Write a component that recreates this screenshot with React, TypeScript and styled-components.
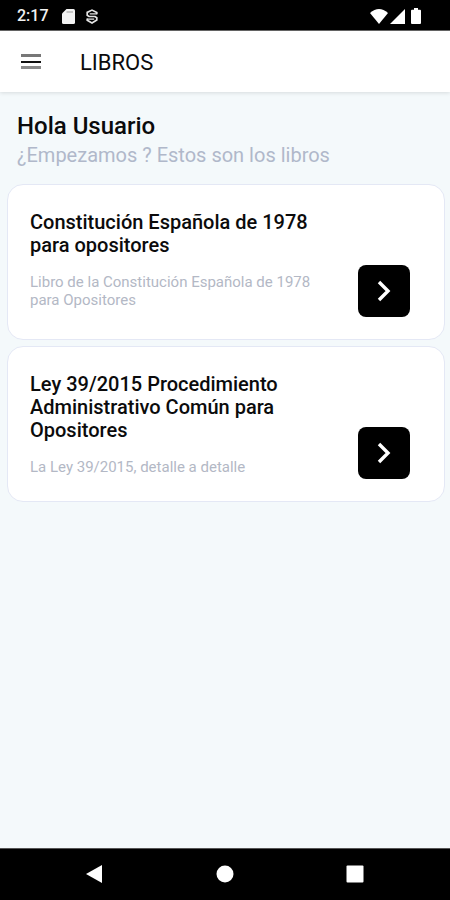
import React from "react";
import styled, { createGlobalStyle } from "styled-components";

const GlobalStyle = createGlobalStyle`
  *, *::before, *::after { box-sizing: border-box; }
  body { margin: 0; background: #f4f9fb; }
  h1, h2, p { margin: 0; }
  button { border: 0; padding: 0; cursor: pointer; font: inherit; }
  svg { display: block; }
`;

const Screen = styled.div`
  min-height: 100vh;
  display: flex;
  flex-direction: column;
  background: #f4f9fb;
  color: #0b0b0c;
  font-family: Roboto, sans-serif;
`;

const StatusBar = styled.div`
  height: 31px;
  padding: 2px 28px 0 17px;
  display: flex;
  align-items: center;
  justify-content: space-between;
  background: #000;
  color: #f2f2f2;
  border-bottom: 1px solid #666;
`;

const StatusGroup = styled.div<{ $gap: number }>`
  display: flex;
  align-items: center;
  gap: ${(p) => p.$gap}px;
`;

const Clock = styled.time`
  font-size: 16px;
  line-height: 20px;
  font-weight: 500;
  margin-right: 2px;
`;

const AppBar = styled.header`
  height: 61px;
  padding: 0 20px;
  display: flex;
  align-items: center;
  gap: 38px;
  background: #fff;
  box-shadow: 0 1px 4px rgba(0, 0, 0, 0.12);
`;

const MenuButton = styled.button`
  background: transparent;
`;

const AppTitle = styled.h1`
  font-size: 22px;
  line-height: 28px;
  font-weight: 400;
  padding-top: 2px;
`;

const Content = styled.main`
  flex: 1;
  padding: 20px 5px 20px 7px;
`;

const Greeting = styled.section`
  padding: 0 10px 15px;
`;

const Hello = styled.h2`
  font-size: 24px;
  line-height: 28px;
  font-weight: 500;
`;

const Lead = styled.p`
  margin-top: 1px;
  font-size: 20px;
  line-height: 28px;
  color: #b0b8ca;
`;

const BookList = styled.div`
  display: flex;
  flex-direction: column;
  gap: 6px;
`;

const BookCard = styled.article`
  min-height: 156px;
  padding: 26px 34px 22px 22px;
  display: flex;
  justify-content: space-between;
  gap: 32px;
  background: #fff;
  border: 1px solid #e4e8f5;
  border-radius: 16px;
`;

const BookText = styled.div`
  flex: 1;
  display: flex;
  flex-direction: column;
  gap: 16px;
`;

const BookTitle = styled.h2`
  font-size: 20px;
  line-height: 23px;
  font-weight: 500;
`;

const BookSummary = styled.p`
  font-size: 15px;
  line-height: 18px;
  color: #b3b8c5;
`;

const OpenButton = styled.button`
  align-self: flex-end;
  flex: none;
  width: 52px;
  height: 52px;
  display: grid;
  place-items: center;
  background: #000;
  border-radius: 8px;
`;

const NavBar = styled.nav`
  height: 52px;
  padding-bottom: 1px;
  display: flex;
  align-items: center;
  justify-content: center;
  gap: 82px;
  background: #000;
  border-top: 1px solid #555;
`;

const NavButton = styled.button`
  width: 48px;
  height: 48px;
  display: grid;
  place-items: center;
  background: transparent;
`;

const books = [
  {
    title: "Constitución Española de 1978 para opositores",
    summary: "Libro de la Constitución Española de 1978 para Opositores",
  },
  {
    title: "Ley 39/2015 Procedimiento Administrativo Común para Opositores",
    summary: "La Ley 39/2015, detalle a detalle",
  },
];

const navItems = [
  { label: "Atrás", shape: <path d="M1 10 17 1v18Z" /> },
  { label: "Inicio", shape: <circle cx="10" cy="10" r="8.5" /> },
  { label: "Recientes", shape: <rect x="1.5" y="1.5" width="17" height="17" rx="1" /> },
];

export default function App() {
  return (
    <>
      <GlobalStyle />
      <Screen>
        <StatusBar>
          <StatusGroup $gap={11}>
            <Clock>2:17</Clock>
            <svg width="13" height="15" viewBox="0 0 13 15" fill="#f2f2f2" aria-hidden="true">
              <path d="M4.5 0H11.5Q13 0 13 1.5V13.5Q13 15 11.5 15H1.5Q0 15 0 13.5V4.5Z" />
              <path d="M4.5 3H11" stroke="#999" strokeWidth="1" />
            </svg>
            <svg width="12" height="15" viewBox="0 0 12 15" fill="none" stroke="#e4e4e4" strokeWidth="1.7" aria-hidden="true">
              <path d="M10.8 5.2V3.6L6 1.1 1.2 3.4V6.2L3 7.5H9L10.8 8.8V11L6 13.9 1.2 11.2V9.6" />
              <path d="M3.8 4.8H10.8M1.2 10.2H8.2" strokeWidth="1.3" />
            </svg>
          </StatusGroup>
          <StatusGroup $gap={2}>
            <svg width="18" height="15" viewBox="0 0 18 15" fill="#fff" aria-hidden="true">
              <path d="M0 4Q9-3.8 18 4L9 15Z" />
            </svg>
            <svg width="15" height="15" viewBox="0 0 15 15" fill="#fff" aria-hidden="true">
              <path d="M15 0V15H0Z" />
            </svg>
            <svg width="15" height="16" viewBox="0 0 15 16" fill="#fff" aria-hidden="true">
              <path d="M7 0H11V1.8H13Q14 1.8 14 2.8V15Q14 16 13 16H5Q4 16 4 15V2.8Q4 1.8 5 1.8H7Z" />
            </svg>
          </StatusGroup>
        </StatusBar>

        <AppBar>
          <MenuButton type="button" aria-label="Abrir menú">
            <svg width="22" height="16" viewBox="0 0 22 16" aria-hidden="true">
              <rect x="1" y="0" width="20" height="3" fill="#777" />
              <rect x="1" y="7" width="20" height="2" fill="#111" />
              <rect x="1" y="12" width="20" height="3" fill="#8a8a8a" />
            </svg>
          </MenuButton>
          <AppTitle>LIBROS</AppTitle>
        </AppBar>

        <Content>
          <Greeting>
            <Hello>Hola Usuario</Hello>
            <Lead>¿Empezamos ? Estos son los libros</Lead>
          </Greeting>
          <BookList>
            {books.map((book) => (
              <BookCard key={book.title}>
                <BookText>
                  <BookTitle>{book.title}</BookTitle>
                  <BookSummary>{book.summary}</BookSummary>
                </BookText>
                <OpenButton type="button" aria-label={`Abrir ${book.title}`}>
                  <svg width="14" height="22" viewBox="0 0 14 22" fill="none" stroke="#fff" strokeWidth="3.4" aria-hidden="true">
                    <path d="M2 2 11 11 2 20" />
                  </svg>
                </OpenButton>
              </BookCard>
            ))}
          </BookList>
        </Content>

        <NavBar aria-label="Sistema">
          {navItems.map((item) => (
            <NavButton key={item.label} type="button" aria-label={item.label}>
              <svg width="20" height="20" viewBox="0 0 20 20" fill="#fff" aria-hidden="true">
                {item.shape}
              </svg>
            </NavButton>
          ))}
        </NavBar>
      </Screen>
    </>
  );
}
